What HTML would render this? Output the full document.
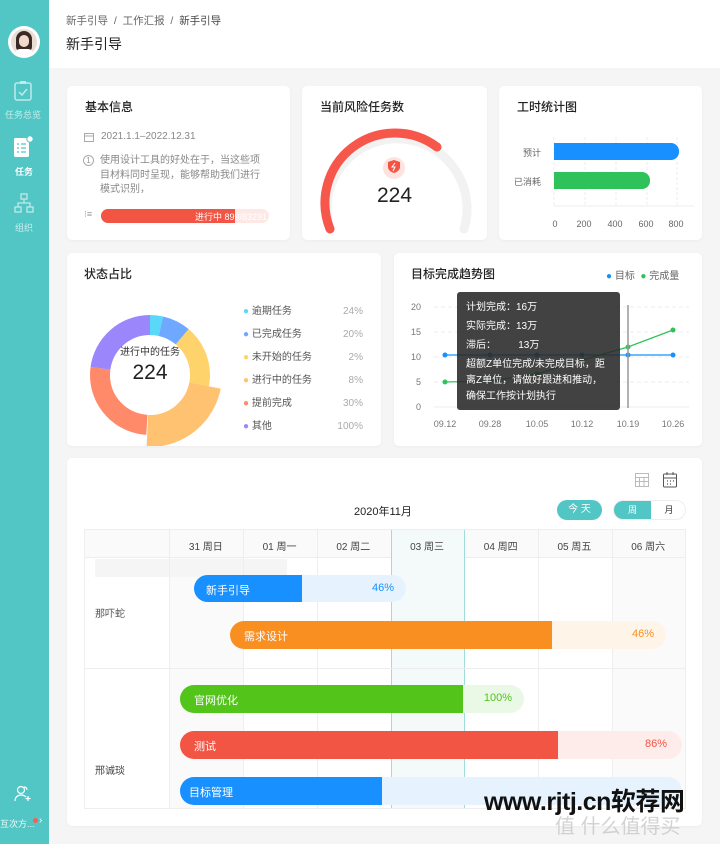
<!DOCTYPE html>
<html><head><meta charset="utf-8"><style>
*{box-sizing:border-box;margin:0;padding:0}
body{width:720px;height:844px;overflow:hidden;background:#f5f5f5;font-family:"Liberation Sans","Noto Sans CJK SC",sans-serif;position:relative;color:#333}
.abs{position:absolute}
.side{left:0;top:0;width:49px;height:844px;background:#52c6c5}
.card{position:absolute;background:#fff;border-radius:5px;box-shadow:0 1px 3px rgba(0,0,0,.04)}
.t{position:absolute;font-size:12px;color:#222;font-weight:500}
.s{font-size:10px;color:#888;position:absolute;white-space:nowrap}
.hd{background:#fff;left:49px;top:0;width:671px;height:68px}
.cell{position:absolute;border-left:1px solid #eee}
.bar{position:absolute;height:28px;border-radius:14px;overflow:hidden;font-size:11px;color:#fff}
</style></head><body>
<div class="abs side">
  <div class="abs" style="left:8px;top:26px;width:32px;height:32px;border-radius:50%;background:#fff"></div>
  <div class="abs" style="left:11px;top:29px;width:26px;height:26px;border-radius:50%;background:#e9ded6;overflow:hidden">
    <div class="abs" style="left:5px;top:2px;width:16px;height:20px;border-radius:8px 8px 4px 4px;background:#3a2a25"></div>
    <div class="abs" style="left:8px;top:6px;width:10px;height:12px;border-radius:5px;background:#f2d9c9"></div>
    <div class="abs" style="left:4px;top:20px;width:18px;height:10px;border-radius:8px;background:#fff"></div>
  </div>
  <svg class="abs" style="left:12px;top:80px" width="24" height="22" viewBox="0 0 24 22"><rect x="3" y="3" width="16" height="17" rx="2" fill="none" stroke="#bfeaea" stroke-width="1.5"/><rect x="8" y="1" width="6" height="3" fill="#bfeaea"/><path d="M7 12l3 3 5-6" fill="none" stroke="#bfeaea" stroke-width="1.5"/></svg>
  <div class="s" style="left:5px;top:108px;color:#c2ecec;font-size:9px">任务总览</div>
  <svg class="abs" style="left:13px;top:135px" width="22" height="24" viewBox="0 0 22 24"><rect x="1" y="3" width="15" height="19" rx="1.5" fill="#fff"/><path d="M4 9h2M8 9h5M4 13h2M8 13h5M4 17h2M8 17h5" stroke="#52c6c5" stroke-width="1.3"/><circle cx="17" cy="4" r="3.2" fill="#fff" stroke="#52c6c5"/></svg>
  <div class="s" style="left:15px;top:165px;color:#fff;font-size:9px;font-weight:bold">任务</div>
  <svg class="abs" style="left:14px;top:193px" width="20" height="20" viewBox="0 0 20 20" fill="none" stroke="#bfeaea" stroke-width="1.3"><rect x="7" y="1" width="6" height="5"/><rect x="1" y="14" width="6" height="5"/><rect x="13" y="14" width="6" height="5"/><path d="M10 6v4M4 14v-4h12v4"/></svg>
  <div class="s" style="left:15px;top:221px;color:#c2ecec;font-size:9px">组织</div>
  <svg class="abs" style="left:13px;top:785px" width="20" height="18" viewBox="0 0 20 18" fill="none" stroke="#fff" stroke-width="1.2"><circle cx="8" cy="5" r="3.5"/><path d="M2 16c0-4 3-6 6-6s4 1 5 2M15 11v5M12.5 13.5h5"/><path d="M11 2c2 0 3 1.5 3 3"/></svg>
  <div class="s" style="left:0;top:817px;color:#eafafa;font-size:9px">互次方...</div>
  <div class="abs" style="left:33px;top:818px;width:5px;height:5px;border-radius:50%;background:#ff5a5a"></div>
  <div class="s" style="left:39px;top:815px;color:#fff;font-size:10px">›</div>
</div>
<div class="abs hd">
  <div class="s" style="left:17px;top:13px;font-size:10.5px;color:#666">新手引导 &nbsp;/&nbsp; 工作汇报 &nbsp;/&nbsp; <span style="color:#444">新手引导</span></div>
  <div class="abs" style="left:17px;top:34px;font-size:14px;color:#222">新手引导</div>
</div>

<div class="card" style="left:67px;top:86px;width:223px;height:154px">
  <div class="t" style="left:18px;top:12px">基本信息</div>
  <svg class="abs" style="left:17px;top:46px" width="10" height="10" viewBox="0 0 10 10" fill="none" stroke="#aaa"><rect x=".5" y="1.5" width="9" height="8"/><path d="M.5 4h9"/></svg>
  <div class="s" style="left:34px;top:45px">2021.1.1–2022.12.31</div>
  <div class="abs" style="left:16px;top:69px;width:11px;height:11px;border:1px solid #aaa;border-radius:50%;font-size:8px;color:#999;text-align:center;line-height:10px">1</div>
  <div class="abs" style="left:33px;top:68px;width:166px;font-size:10px;line-height:14.5px;color:#888">使用设计工具的好处在于，当这些项目材料同时呈现，能够帮助我们进行模式识别，</div>
  <div class="s" style="left:17px;top:123px;font-size:9px;color:#999">⁝≡</div>
  <div class="abs" style="left:34px;top:123px;width:168px;height:14px;border-radius:7px;background:#fde8e6"></div>
  <div class="abs" style="left:34px;top:123px;width:134px;height:14px;border-radius:7px 0 0 7px;background:#f25544"></div>
  <div class="s" style="left:128px;top:124px;color:#fff;font-size:9px">进行中 899/83291</div>
</div>
<div class="card" style="left:302px;top:86px;width:185px;height:154px">
  <div class="t" style="left:18px;top:12px">当前风险任务数</div>
  <svg class="abs" style="left:0;top:0" width="185" height="154">
    <path d="M28 143 A70 70 0 1 1 162 143" fill="none" stroke="#f2f2f2" stroke-width="9" stroke-linecap="round"/>
    <path d="M28 143 A70 70 0 0 1 135 61" fill="none" stroke="#f7574b" stroke-width="9" stroke-linecap="round"/>
    <circle cx="92" cy="82" r="11" fill="#fde3e0"/>
    <path d="M86 76l6-2 6 2v5c0 3-3 5-6 6-3-1-6-3-6-6z" fill="#f25544"/>
    <path d="M93 77l-3 4h3l-2 4" stroke="#fff" stroke-width="1" fill="none"/>
  </svg>
  <div class="abs" style="left:0;width:185px;text-align:center;top:98px;font-size:21px;color:#222">224</div>
</div>
<div class="card" style="left:499px;top:86px;width:203px;height:154px">
  <div class="t" style="left:18px;top:12px">工时统计图</div>
  <svg class="abs" style="left:0;top:0" width="203" height="154" font-size="9" fill="#666" font-family="Liberation Sans,Noto Sans CJK SC,sans-serif">
    <g stroke="#eee" stroke-dasharray="3 2"><path d="M55 51v70M86 51v70M117 51v70M148 51v70M178 51v70"/></g>
    <path d="M55 120h140" stroke="#eee"/>
    <rect x="55" y="57" width="125" height="17" rx="8" fill="#1890ff"/><rect x="55" y="57" width="10" height="17" fill="#1890ff"/>
    <rect x="55" y="86" width="96" height="17" rx="8" fill="#2fc25b"/><rect x="55" y="86" width="10" height="17" fill="#2fc25b"/>
    <text x="42" y="70" text-anchor="end">预计</text><text x="42" y="99" text-anchor="end">已消耗</text>
    <g text-anchor="middle"><text x="56" y="141">0</text><text x="85" y="141">200</text><text x="116" y="141">400</text><text x="147" y="141">600</text><text x="177" y="141">800</text></g>
  </svg>
</div>
<div class="card" style="left:67px;top:253px;width:314px;height:193px">
  <div class="t" style="left:17px;top:12px">状态占比</div>
  <svg class="abs" style="left:0;top:0" width="314" height="193">
    <g transform="translate(83,122) rotate(-90)" fill="none">
      <circle r="50" stroke="#5ad8fa" stroke-width="20" stroke-dasharray="11 303"/>
      <circle r="50" stroke="#6fa9ff" stroke-width="20" stroke-dasharray="0 11 24 303"/>
      <circle r="50" stroke="#ffd36b" stroke-width="20" stroke-dasharray="0 35 53 303"/>
      <circle r="56" stroke="#ffc271" stroke-width="32" stroke-dasharray="0 98.5 80 400"/>
      <circle r="50" stroke="#ff8a6a" stroke-width="20" stroke-dasharray="0 160 82 303"/>
      <circle r="50" stroke="#9b87fb" stroke-width="20" stroke-dasharray="0 242 73 303"/>
    </g>
  </svg>
  <div class="abs" style="left:43px;top:90px;width:80px;text-align:center;font-size:10px;color:#333">进行中的任务</div>
  <div class="abs" style="left:43px;top:108px;width:80px;text-align:center;font-size:21px;color:#222">224</div>
  <div class="abs" style="left:176px;top:47px;width:120px;font-size:10px;color:#555;line-height:23px">
    <div><span style="color:#5ad8fa">●</span> 逾期任务<span style="float:right;color:#aaa">24%</span></div>
    <div><span style="color:#6fa9ff">●</span> 已完成任务<span style="float:right;color:#aaa">20%</span></div>
    <div><span style="color:#ffd36b">●</span> 未开始的任务<span style="float:right;color:#aaa">2%</span></div>
    <div><span style="color:#ffc271">●</span> 进行中的任务<span style="float:right;color:#aaa">8%</span></div>
    <div><span style="color:#ff8a6a">●</span> 提前完成<span style="float:right;color:#aaa">30%</span></div>
    <div><span style="color:#9b87fb">●</span> 其他<span style="float:right;color:#aaa">100%</span></div>
  </div>
</div>
<div class="card" style="left:394px;top:253px;width:308px;height:193px">
  <div class="t" style="left:17px;top:12px">目标完成趋势图</div>
  <div class="s" style="left:212px;top:14px;color:#666"><span style="color:#1890ff">●</span> 目标 &nbsp;<span style="color:#2fc25b">●</span> 完成量</div>
  <svg class="abs" style="left:0;top:0" width="308" height="193" font-size="9" fill="#777" font-family="Liberation Sans,sans-serif">
    <g stroke="#eee" stroke-dasharray="4 3"><path d="M40 54h255M40 79h255M40 104h255M40 129h255"/></g><path d="M40 154h255" stroke="#eee"/>
    <g text-anchor="end"><text x="27" y="57">20</text><text x="27" y="82">15</text><text x="27" y="107">10</text><text x="27" y="132">5</text><text x="27" y="157">0</text></g>
    <g text-anchor="middle"><text x="51" y="174">09.12</text><text x="96" y="174">09.28</text><text x="143" y="174">10.05</text><text x="188" y="174">10.12</text><text x="234" y="174">10.19</text><text x="279" y="174">10.26</text></g>
    <path d="M51 102H279" stroke="#1890ff" stroke-width="1.3"/>
    <g fill="#1890ff"><circle cx="51" cy="102" r="2.5"/><circle cx="96" cy="102" r="2.5"/><circle cx="143" cy="102" r="2.5"/><circle cx="188" cy="102" r="2.5"/><circle cx="234" cy="102" r="2.5"/><circle cx="279" cy="102" r="2.5"/></g>
    <path d="M51 129L96 128L143 121L188 107L234 94L279 77" stroke="#2fc25b" stroke-width="1.3" fill="none"/>
    <g fill="#2fc25b"><circle cx="51" cy="129" r="2.5"/><circle cx="143" cy="121" r="2.5"/><circle cx="234" cy="94" r="2.5"/><circle cx="279" cy="77" r="2.5"/></g>
    <path d="M234 52v103" stroke="#999" stroke-width="1.5"/>
    <rect x="63" y="39" width="163" height="118" rx="3" fill="rgba(40,40,40,.88)"/>
  </svg>
  <div class="abs" style="left:72px;top:45px;font-size:10px;color:#fff;line-height:19px;width:146px">
    <div>计划完成：16万</div><div>实际完成：13万</div><div>滞后：&nbsp;&nbsp;&nbsp;&nbsp;&nbsp;&nbsp;&nbsp;&nbsp;13万</div>
    <div style="line-height:16px;margin-top:2px">超额Z单位完成/未完成目标，距离Z单位，请做好跟进和推动，确保工作按计划执行</div>
  </div>
</div>
<div class="card" style="left:67px;top:458px;width:635px;height:368px">
  <svg class="abs" style="left:567px;top:14px" width="16" height="16" viewBox="0 0 16 16" fill="none" stroke="#bbb"><rect x="1.5" y="1.5" width="13" height="13"/><path d="M1.5 5.5h13M1.5 9.5h13M5.5 5.5v9M10 5.5v9"/></svg>
  <svg class="abs" style="left:595px;top:13px" width="16" height="17" viewBox="0 0 16 17" fill="none" stroke="#555"><rect x="1.5" y="3" width="13" height="13" rx="1"/><path d="M1.5 7h13M5 1v3M11 1v3"/><path d="M5 10h1M8 10h1M11 10h1M5 13h1M8 13h1" stroke-width="1.2"/></svg>
  <div class="abs" style="left:287px;top:45px;font-size:11px;color:#222">2020年11月</div>
  <div class="abs" style="left:490px;top:42px;width:45px;height:20px;border-radius:10px;background:#52c6c5;color:#fff;font-size:10px;text-align:center;line-height:20px">今 天</div>
  <div class="abs" style="left:546px;top:42px;width:73px;height:20px;border-radius:10px;border:1px solid #eee;overflow:hidden;font-size:9px">
    <div class="abs" style="left:0;top:0;width:37px;height:20px;background:#52c6c5;color:#fff;text-align:center;line-height:19px">周</div>
    <div class="abs" style="left:37px;top:0;width:36px;text-align:center;line-height:19px;color:#333">月</div>
  </div>
  <div class="abs" style="left:17px;top:71px;width:602px;height:280px;border:1px solid #eee;background:#fff">
    <div class="abs" style="left:0;top:0;width:600px;height:28px;background:#fafafa;border-bottom:1px solid #eee"></div>
    <div class="abs" style="left:84px;top:28px;width:74px;height:250px;background:#fafafa"></div>
    <div class="abs" style="left:527px;top:28px;width:73px;height:250px;background:#fafafa"></div>
    <div class="abs" style="left:306px;top:0;width:74px;height:278px;background:#f4fafa;border-left:1px solid #9fdcdc;border-right:1px solid #9fdcdc"></div>
    <div class="abs" style="left:10px;top:29px;width:192px;height:18px;background:#f5f5f5"></div>
    <div class="cell" style="left:84px;top:0;height:278px"></div>
    <div class="cell" style="left:158px;top:0;height:278px"></div>
    <div class="cell" style="left:232px;top:0;height:278px"></div>
    <div class="cell" style="left:453px;top:0;height:278px"></div>
    <div class="cell" style="left:527px;top:0;height:278px"></div>
    <div class="abs" style="left:0;top:138px;width:600px;border-top:1px solid #eee"></div>
    <div class="abs" style="top:8px;left:84px;width:516px;font-size:10px;color:#444;display:flex">
      <span style="width:74px;text-align:center">31 周日</span><span style="width:74px;text-align:center">01 周一</span><span style="width:74px;text-align:center">02 周二</span><span style="width:74px;text-align:center">03 周三</span><span style="width:74px;text-align:center">04 周四</span><span style="width:74px;text-align:center">05 周五</span><span style="width:74px;text-align:center">06 周六</span>
    </div>
    <div class="s" style="left:10px;top:75px;color:#555">那吓蛇</div>
    <div class="s" style="left:10px;top:232px;color:#444">邢诚琰</div>
    <div class="bar" style="left:109px;top:45px;width:212px;height:27px;background:#e6f3ff"><div class="abs" style="left:0;top:0;width:108px;height:27px;background:#1890ff"></div><span class="abs" style="left:12px;top:7px">新手引导</span><span class="abs" style="right:12px;top:7px;color:#1890ff">46%</span></div>
    <div class="bar" style="left:145px;top:91px;width:436px;background:#fff4e8"><div class="abs" style="left:0;top:0;width:322px;height:28px;background:#fa8f21"></div><span class="abs" style="left:14px;top:7px">需求设计</span><span class="abs" style="right:12px;top:7px;color:#fa8f21">46%</span></div>
    <div class="bar" style="left:95px;top:155px;width:344px;background:#eaf8e6"><div class="abs" style="left:0;top:0;width:283px;height:28px;background:#52c41a"></div><span class="abs" style="left:14px;top:7px">官网优化</span><span class="abs" style="right:12px;top:7px;color:#52c41a">100%</span></div>
    <div class="bar" style="left:95px;top:201px;width:502px;background:#feecea"><div class="abs" style="left:0;top:0;width:378px;height:28px;background:#f25544"></div><span class="abs" style="left:14px;top:7px">测试</span><span class="abs" style="right:15px;top:7px;color:#f25544">86%</span></div>
    <div class="bar" style="left:95px;top:247px;width:502px;background:#e6f3ff"><div class="abs" style="left:0;top:0;width:202px;height:28px;background:#1890ff"></div><span class="abs" style="left:9px;top:7px">目标管理</span></div>
  </div>
</div>
<div class="abs" style="left:484px;top:782px;font-size:25px;font-weight:bold;color:#111;white-space:nowrap;letter-spacing:-0.5px">www.rjtj.cn软荐网</div>
<div class="abs" style="left:555px;top:810px;font-size:20px;color:rgba(200,200,200,.8);white-space:nowrap">值 什么值得买</div>
</body></html>
